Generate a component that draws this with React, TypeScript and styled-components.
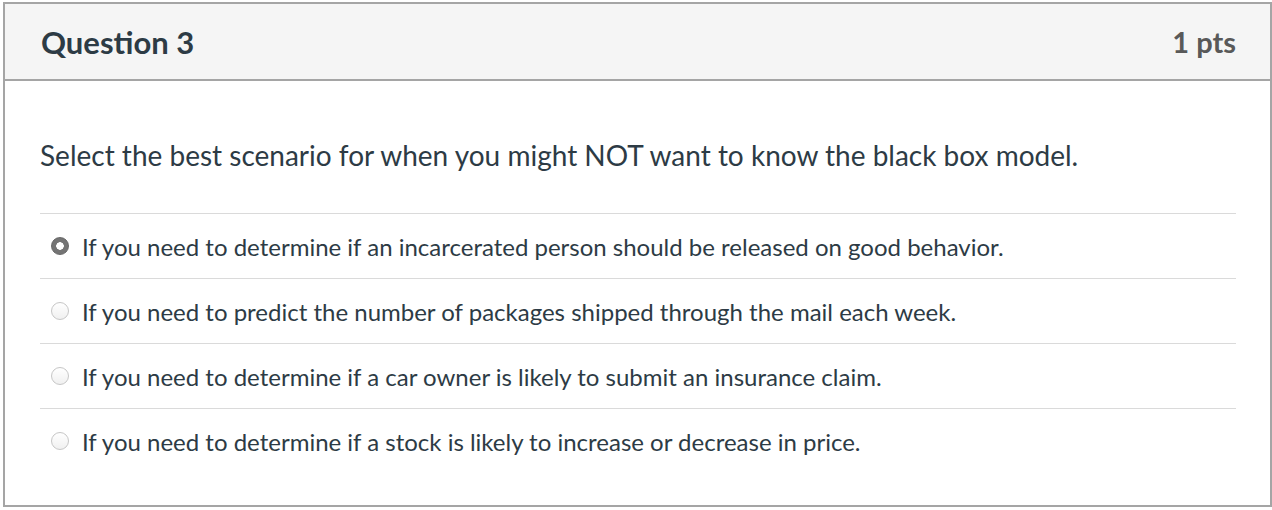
import * as React from 'react';
import styled, { createGlobalStyle } from 'styled-components';

const GlobalStyle = createGlobalStyle`
	body {
		margin: 0;
		background: #fff;
		font-family: Lato, 'Open Sans', sans-serif;
	}
	#root {
		padding: 2px 0 0 3px;
	}
`;

const QuestionCard = styled.div`
	width: 1269px;
	height: 505px;
	box-sizing: border-box;
	border: 2px solid #a5a5a5;
	display: flex;
	flex-direction: column;
`;

const Header = styled.div`
	height: 77px;
	box-sizing: border-box;
	background: #f5f5f5;
	border-bottom: 2px solid #a5a5a5;
	display: flex;
	justify-content: space-between;
	align-items: center;
	padding: 0 34px 0 36px;
`;

const Title = styled.h2`
	margin: 0;
	font-size: 31px;
	font-weight: 700;
	color: #2d3b45;
`;

const Points = styled.span`
	font-size: 29px;
	font-weight: 700;
	color: #595959;
`;

const Body = styled.div`
	padding: 54px 34px 0 35px;
`;

const Prompt = styled.p`
	margin: 0;
	font-size: 28px;
	line-height: 40px;
	color: #2d3b45;
`;

const Answers = styled.ul`
	list-style: none;
	margin: 38px 0 0;
	padding: 0;
`;

const Answer = styled.li`
	height: 65px;
	box-sizing: border-box;
	border-top: 1px solid #dadada;
	display: flex;
	align-items: center;
	gap: 13px;
	padding-left: 11px;
	font-size: 24px;
	color: #2d3b45;
`;

const Radio = styled.span<{ $checked?: boolean }>`
	width: 18px;
	height: 18px;
	border-radius: 50%;
	box-sizing: border-box;
	flex-shrink: 0;
	${props => props.$checked ? `
		background: radial-gradient(circle, #fff 0 3.5px, #747474 4px);
		border: 1px solid #666;
	` : `
		background: linear-gradient(#fff, #f0f0f0);
		border: 1px solid #c6c6c6;
	`}
`;

const answers = [
	'If you need to determine if an incarcerated person should be released on good behavior.',
	'If you need to predict the number of packages shipped through the mail each week.',
	'If you need to determine if a car owner is likely to submit an insurance claim.',
	'If you need to determine if a stock is likely to increase or decrease in price.',
];

export default function App() {
	return (
		<>
			<GlobalStyle />
			<QuestionCard>
				<Header>
					<Title>Question 3</Title>
					<Points>1 pts</Points>
				</Header>
				<Body>
					<Prompt>Select the best scenario for when you might NOT want to know the black box model.</Prompt>
					<Answers>
						{answers.map((text, i) => (
							<Answer key={i}>
								<Radio $checked={i === 0} />
								<span>{text}</span>
							</Answer>
						))}
					</Answers>
				</Body>
			</QuestionCard>
		</>
	);
}
